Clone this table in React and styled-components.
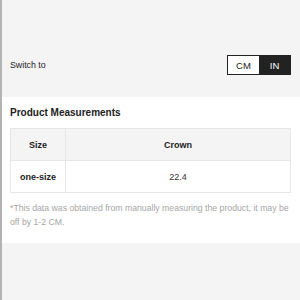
import styled, { createGlobalStyle } from "styled-components"

const Global = createGlobalStyle`
    html, body {
        margin:0;
        padding:0;
        background:#f4f4f4;
    }
    body {
        font-family:"Liberation Sans", Arial, sans-serif;
    }
`

const Page = styled.div`
    height:300px;
    border-left:2px solid #b3b3b3;
    box-sizing:border-box;
    background:#f4f4f4;
    display:flex;
    flex-direction:column;
    `

const Header = styled.div`
    height:97px;
    box-sizing:border-box;
    padding:55px 9px 0 8px;
    `

const SwitchRow = styled.div`
    height:20px;
    display:flex;
    align-items:center;
    justify-content:space-between;
    `

const Label = styled.span`
    font-size:8.8px;
    color:#222;
    `

const Toggle = styled.div`
    display:flex;
    border:1px solid #222;
    height:20px;
    box-sizing:border-box;
    `

const Unit = styled.div`
    width:31px;
    display:flex;
    align-items:center;
    justify-content:center;
    font-size:9.5px;
    background:${p => p.active ? "#222" : "#fff"};
    color:${p => p.active ? "#fff" : "#222"};
    `

const Body = styled.div`
    background:#fff;
    padding:8px 9px 0 8px;
    height:146px;
    box-sizing:border-box;
    `

const Title = styled.h2`
    margin:0;
    font-size:10px;
    line-height:16px;
    font-weight:bold;
    color:#222;
    `

const Table = styled.div`
    margin-top:7px;
    display:grid;
    grid-template-columns:55px 1fr;
    border:1px solid #e6e6e6;
    `

const Cell = styled.div`
    height:31px;
    display:flex;
    align-items:center;
    justify-content:center;
    font-size:9px;
    font-weight:${p => p.bold ? "bold" : "normal"};
    color:${p => p.bold ? "#222" : "#333"};
    background:${p => p.head ? "#f4f4f4" : "#fff"};
    border-right:${p => p.first ? "1px solid #e6e6e6" : "none"};
    border-bottom:${p => p.head ? "1px solid #e6e6e6" : "none"};
    `

const Note = styled.p`
    margin:8px -6px 0 0;
    font-size:8.7px;
    line-height:14px;
    color:#a6a6a6;
    `

export default function App() {
    return (
        <>
            <Global />
            <Page>
                <Header>
                    <SwitchRow>
                        <Label>Switch to</Label>
                        <Toggle>
                            <Unit>CM</Unit>
                            <Unit active>IN</Unit>
                        </Toggle>
                    </SwitchRow>
                </Header>
                <Body>
                    <Title>Product Measurements</Title>
                    <Table>
                        <Cell head first bold>Size</Cell>
                        <Cell head bold>Crown</Cell>
                        <Cell first bold>one-size</Cell>
                        <Cell>22.4</Cell>
                    </Table>
                    <Note>*This data was obtained from manually measuring the product, it may be off by 1-2 CM.</Note>
                </Body>
            </Page>
        </>
    )
}
